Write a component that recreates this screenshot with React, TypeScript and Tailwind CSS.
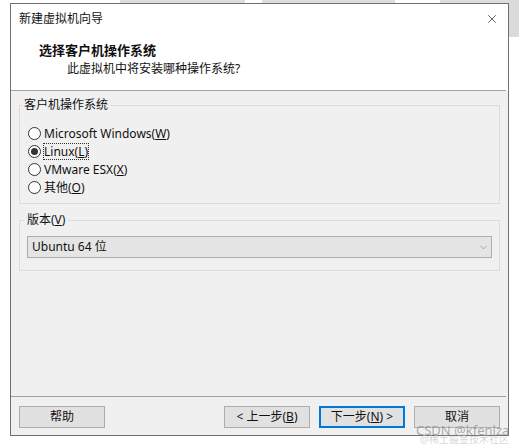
import { ChevronDown, X } from 'lucide-react';

const font = "font-['Noto_Sans','Noto_Sans_CJK_SC',sans-serif]";

function Radio({ checked, children, focused }: { checked?: boolean; children: React.ReactNode; focused?: boolean }) {
  return (
    <div className="flex h-[18px] items-center">
      <span className="flex h-[13px] w-[13px] items-center justify-center rounded-full border border-[#333] bg-white">
        {checked && <span className="h-[7px] w-[7px] rounded-full bg-[#333]" />}
      </span>
      <span className={`ml-[3px] leading-[15px] ${focused ? 'outline outline-1 outline-dotted outline-[#333]' : ''}`}>
        {children}
      </span>
    </div>
  );
}

function Btn({ children, primary }: { children: React.ReactNode; primary?: boolean }) {
  return (
    <button
      className={`flex h-[22px] w-[86px] items-center justify-center bg-[#e1e1e1] text-[12px] text-[#111] ${
        primary ? 'border-2 border-[#0078d7]' : 'border border-[#adadad]'
      }`}
    >
      {children}
    </button>
  );
}

export default function App() {
  return (
    <div className={`relative h-[446px] w-[519px] overflow-hidden bg-white text-[12px] text-[#111] ${font}`}>
      {/* 背景程序的标签 */}
      <div className="absolute left-[120px] top-0 h-[4px] w-[125px] bg-[#dedede]" />
      <div className="absolute left-[262px] top-0 h-[4px] w-[133px] bg-[#dedede]" />
      <div className="absolute left-[440px] top-0 h-[4px] w-[79px] bg-[#dedede]" />
      <div className="absolute right-0 top-0 h-[37px] w-[11px] bg-[#dadada]" />

      {/* 对话框 */}
      <div className="relative z-10 ml-[10px] mt-[3px] flex h-[433px] w-[499px] flex-col border border-[#707070] bg-white">
        <div className="flex h-[30px] shrink-0 items-center justify-between pl-[8px] pr-[9px]">
          <span className="leading-[16px]">新建虚拟机向导</span>
          <X size={14} strokeWidth={1.2} className="text-[#222]" />
        </div>

        <div className="mr-[2px] h-[57px] shrink-0 border-b border-[#a0a0a0] pt-[8px]">
          <div className="pl-[28px] text-[13px] font-bold leading-[16px]">选择客户机操作系统</div>
          <div className="mt-[3px] pl-[56px] leading-[16px]">此虚拟机中将安装哪种操作系统?</div>
        </div>

        <div className="flex flex-1 flex-col bg-[#f0f0f0]">
          <div className="relative mx-[8px] mt-[14px] border border-[#dcdcdc] pb-[7px] pl-[8px] pt-[18px]">
            <span className="absolute -top-[9px] left-[2px] bg-[#f0f0f0] px-[2px] leading-[16px]">客户机操作系统</span>
            <Radio>
              Microsoft Windows(<u>W</u>)
            </Radio>
            <Radio checked focused>
              Linux(<u>L</u>)
            </Radio>
            <Radio>
              VMware ESX(<u>X</u>)
            </Radio>
            <Radio>
              其他(<u>O</u>)
            </Radio>
          </div>

          <div className="relative mx-[8px] mt-[16px] border border-[#dcdcdc] px-[7px] pb-[12px] pt-[15px]">
            <span className="absolute -top-[9px] left-[4px] bg-[#f0f0f0] px-[3px] leading-[16px]">
              版本(<u>V</u>)
            </span>
            <div className="flex h-[22px] items-center justify-between border border-[#adadad] bg-[#e5e5e5] pl-[4px] pr-[2px]">
              <span>Ubuntu 64 位</span>
              <ChevronDown size={11} strokeWidth={1.2} className="text-[#777]" />
            </div>
          </div>

          <div className="flex-1" />

          <div className="mr-[2px] border-t border-[#a0a0a0]" />
          <div className="flex items-center justify-between px-[8px] pb-[7px] pt-[9px]">
            <Btn>帮助</Btn>
            <div className="flex gap-[9px]">
              <Btn>&lt; 上一步(<u>B</u>)</Btn>
              <Btn primary>
                下一步(<u>N</u>) &gt;
              </Btn>
              <Btn>取消</Btn>
            </div>
          </div>
        </div>
      </div>

      {/* 水印 */}
      <div className="absolute left-[416px] top-[424px] z-20 text-[13px] leading-[13px] text-[#8a8a8a]/70">
        CSDN @kfenlza
      </div>
      <div className="absolute left-[420px] top-[434px] z-20 text-[10px] leading-[11px] text-[#bbbbbb]/60">
        @稀土掘金技术社区
      </div>
    </div>
  );
}
